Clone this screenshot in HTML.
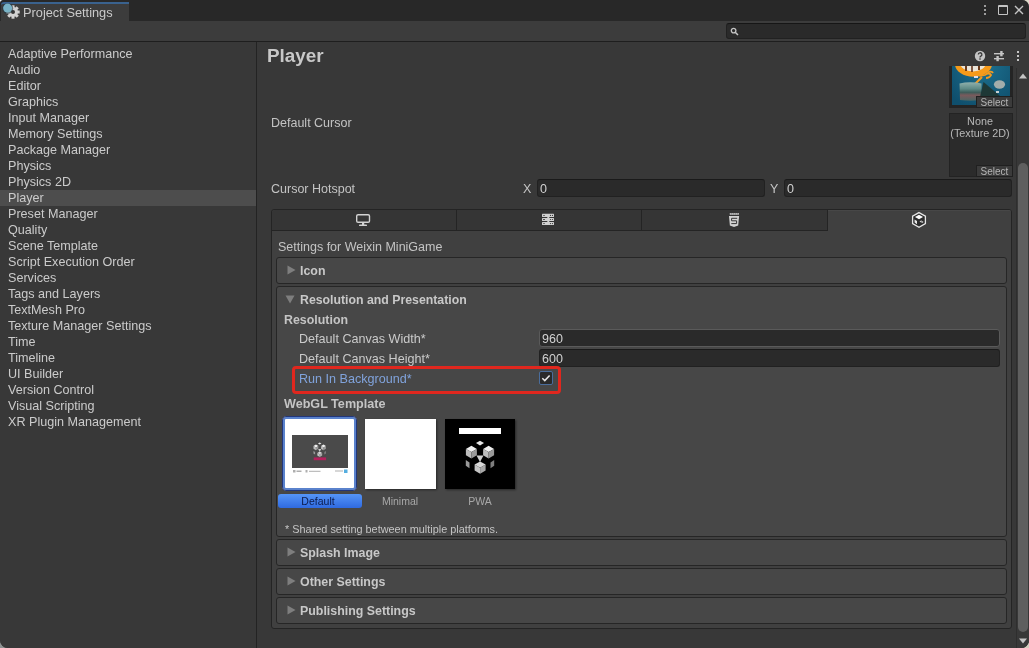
<!DOCTYPE html>
<html><head><meta charset="utf-8"><style>
html,body{margin:0;padding:0;width:1029px;height:648px;overflow:hidden;background:#383838}
body{position:relative;font-family:"Liberation Sans",sans-serif}
.r{position:absolute}
.t{position:absolute;white-space:nowrap;line-height:1}
</style></head><body>
<div class="r" style="left:0;top:0;width:8px;height:8px;background:#e6eaee"></div>
<div class="r" style="right:0;top:0;width:8px;height:8px;background:#dcd8c8"></div>
<div class="r" style="left:0;bottom:0;width:8px;height:8px;background:#8e9292"></div>
<div class="r" style="right:0;bottom:0;width:8px;height:8px;background:#d2cdbd"></div>
<div class="r" style="left:0;top:0;width:1029px;height:648px;overflow:hidden;border-radius:4px 7px 8px 8px;background:#383838;will-change:transform">
<div class="r" style="left:0px;top:0px;width:1029px;height:21px;background:#282828"></div>
<div class="r" style="left:1px;top:2px;width:128px;height:19px;background:#3c3c3c;border-top:2px solid #3a628e;box-sizing:border-box;border-top-left-radius:3px"></div>
<svg class="r" style="left:0px;top:0px" width="22" height="21" viewBox="0 0 22 21">
<g transform="translate(13,12)" fill="#d2d2d2"><circle r="4.9"/><rect x="-1.5" y="-6.7" width="3" height="3" transform="rotate(0)"/><rect x="-1.5" y="-6.7" width="3" height="3" transform="rotate(45)"/><rect x="-1.5" y="-6.7" width="3" height="3" transform="rotate(90)"/><rect x="-1.5" y="-6.7" width="3" height="3" transform="rotate(135)"/><rect x="-1.5" y="-6.7" width="3" height="3" transform="rotate(180)"/><rect x="-1.5" y="-6.7" width="3" height="3" transform="rotate(225)"/><rect x="-1.5" y="-6.7" width="3" height="3" transform="rotate(270)"/><rect x="-1.5" y="-6.7" width="3" height="3" transform="rotate(315)"/><circle r="2" fill="#363636"/></g>
<circle cx="7.8" cy="8.4" r="5.4" fill="#1f3440" opacity="0.6"/>
<circle cx="7.6" cy="8.1" r="4.5" fill="#79b3c6"/>
</svg>
<div class="t" style="left:23px;top:7.16px;font-size:12.8px;font-weight:400;color:#cbcbcb;">Project Settings</div>
<div class="r" style="left:984px;top:5px;width:2px;height:2px;background:#c4c4c4;border-radius:1px"></div>
<div class="r" style="left:984px;top:9px;width:2px;height:2px;background:#c4c4c4;border-radius:1px"></div>
<div class="r" style="left:984px;top:13px;width:2px;height:2px;background:#c4c4c4;border-radius:1px"></div>
<div class="r" style="left:998px;top:5px;width:10px;height:10px;border:1px solid #c4c4c4;border-top-width:2px;box-sizing:border-box;border-radius:1px"></div>
<svg class="r" style="left:1014px;top:5px" width="10" height="10" viewBox="0 0 10 10"><path d="M1 1L9 9M9 1L1 9" stroke="#c4c4c4" stroke-width="1.4"/></svg>
<div class="r" style="left:0px;top:21px;width:1029px;height:20px;background:#3c3c3c"></div>
<div class="r" style="left:726px;top:23px;width:300px;height:16px;background:#2a2a2a;border:1px solid #212121;border-top-color:#161616;box-sizing:border-box;border-radius:3px"></div>
<svg class="r" style="left:730px;top:27px" width="10" height="10" viewBox="0 0 10 10"><circle cx="3.6" cy="3.6" r="2.3" fill="none" stroke="#c4c4c4" stroke-width="1.3"/><path d="M5.2 5.2L8 8" stroke="#c4c4c4" stroke-width="1.5"/></svg>
<div class="r" style="left:0px;top:41px;width:1029px;height:1px;background:#1e1e1e"></div>
<div class="r" style="left:0px;top:42px;width:256px;height:606px;background:#383838"></div>
<div class="t" style="left:8px;top:48.33px;font-size:12.6px;font-weight:400;color:#cbcbcb;">Adaptive Performance</div>
<div class="t" style="left:8px;top:64.33px;font-size:12.6px;font-weight:400;color:#cbcbcb;">Audio</div>
<div class="t" style="left:8px;top:80.33px;font-size:12.6px;font-weight:400;color:#cbcbcb;">Editor</div>
<div class="t" style="left:8px;top:96.33px;font-size:12.6px;font-weight:400;color:#cbcbcb;">Graphics</div>
<div class="t" style="left:8px;top:112.33px;font-size:12.6px;font-weight:400;color:#cbcbcb;">Input Manager</div>
<div class="t" style="left:8px;top:128.33px;font-size:12.6px;font-weight:400;color:#cbcbcb;">Memory Settings</div>
<div class="t" style="left:8px;top:144.33px;font-size:12.6px;font-weight:400;color:#cbcbcb;">Package Manager</div>
<div class="t" style="left:8px;top:160.33px;font-size:12.6px;font-weight:400;color:#cbcbcb;">Physics</div>
<div class="t" style="left:8px;top:176.33px;font-size:12.6px;font-weight:400;color:#cbcbcb;">Physics 2D</div>
<div class="r" style="left:0px;top:190px;width:256px;height:16px;background:#4d4d4d"></div>
<div class="t" style="left:8px;top:192.33px;font-size:12.6px;font-weight:400;color:#cbcbcb;">Player</div>
<div class="t" style="left:8px;top:208.33px;font-size:12.6px;font-weight:400;color:#cbcbcb;">Preset Manager</div>
<div class="t" style="left:8px;top:224.33px;font-size:12.6px;font-weight:400;color:#cbcbcb;">Quality</div>
<div class="t" style="left:8px;top:240.33px;font-size:12.6px;font-weight:400;color:#cbcbcb;">Scene Template</div>
<div class="t" style="left:8px;top:256.33px;font-size:12.6px;font-weight:400;color:#cbcbcb;">Script Execution Order</div>
<div class="t" style="left:8px;top:272.33px;font-size:12.6px;font-weight:400;color:#cbcbcb;">Services</div>
<div class="t" style="left:8px;top:288.33px;font-size:12.6px;font-weight:400;color:#cbcbcb;">Tags and Layers</div>
<div class="t" style="left:8px;top:304.33px;font-size:12.6px;font-weight:400;color:#cbcbcb;">TextMesh Pro</div>
<div class="t" style="left:8px;top:320.33px;font-size:12.6px;font-weight:400;color:#cbcbcb;">Texture Manager Settings</div>
<div class="t" style="left:8px;top:336.33px;font-size:12.6px;font-weight:400;color:#cbcbcb;">Time</div>
<div class="t" style="left:8px;top:352.33px;font-size:12.6px;font-weight:400;color:#cbcbcb;">Timeline</div>
<div class="t" style="left:8px;top:368.33px;font-size:12.6px;font-weight:400;color:#cbcbcb;">UI Builder</div>
<div class="t" style="left:8px;top:384.33px;font-size:12.6px;font-weight:400;color:#cbcbcb;">Version Control</div>
<div class="t" style="left:8px;top:400.33px;font-size:12.6px;font-weight:400;color:#cbcbcb;">Visual Scripting</div>
<div class="t" style="left:8px;top:416.33px;font-size:12.6px;font-weight:400;color:#cbcbcb;">XR Plugin Management</div>
<div class="r" style="left:256px;top:42px;width:1px;height:606px;background:#232323"></div>
<div class="r" style="left:257px;top:42px;width:772px;height:606px;background:#383838"></div>
<div class="t" style="left:267px;top:46.60px;font-size:18.9px;font-weight:700;color:#c8c8c8;">Player</div>
<svg class="r" style="left:974px;top:50px" width="12" height="12" viewBox="0 0 12 12"><circle cx="6" cy="6" r="5.2" fill="#c4c4c4"/><path d="M4.3 4.6a1.8 1.8 0 1 1 2.6 1.6c-.6.3-.9.6-.9 1.3" fill="none" stroke="#383838" stroke-width="1.3"/><rect x="5.3" y="8.3" width="1.4" height="1.4" fill="#383838"/></svg>
<svg class="r" style="left:993px;top:50px" width="12" height="12" viewBox="0 0 12 12" fill="#c4c4c4"><rect x="1" y="3" width="10" height="1.4"/><rect x="7.2" y="1" width="2.4" height="5.3"/><rect x="1" y="8" width="10" height="1.4"/><rect x="3.4" y="6" width="2.4" height="5.2"/></svg>
<div class="r" style="left:1017px;top:51px;width:2px;height:2px;background:#c4c4c4"></div>
<div class="r" style="left:1017px;top:55px;width:2px;height:2px;background:#c4c4c4"></div>
<div class="r" style="left:1017px;top:59px;width:2px;height:2px;background:#c4c4c4"></div>
<div class="r" style="left:257px;top:66px;width:772px;height:582px;overflow:hidden">
<div class="r" style="left:692px;top:-16px;width:64px;height:58px;background:#242424"></div>
<svg class="r" style="left:683px;top:-26px" width="100" height="70" viewBox="940 40 100 70">
<defs><radialGradient id="bg" cx="0.55" cy="0.35" r="0.75"><stop offset="0" stop-color="#1d7190"/><stop offset="1" stop-color="#0f4f6d"/></radialGradient>
<linearGradient id="brl" x1="0" y1="0" x2="0" y2="1"><stop offset="0" stop-color="#8fb0ac"/><stop offset="0.35" stop-color="#5e8a86"/><stop offset="0.55" stop-color="#3e5d5a"/><stop offset="0.7" stop-color="#7a5a5c"/><stop offset="1" stop-color="#4a6664"/></linearGradient></defs>
<rect x="952" y="45" width="58" height="60" fill="url(#bg)"/>
<ellipse cx="973.5" cy="64" rx="18.5" ry="12.8" fill="#f59a1a"/>
<ellipse cx="973" cy="63" rx="13" ry="8.5" fill="#e9e4da"/>
<path d="M966 66v5M979 66v4" stroke="#6b3a1a" stroke-width="2"/>
<path d="M972 66v6" stroke="#5a2a10" stroke-width="1.5"/>
<path d="M976 75c3 1 6 1 9 0M985 75c2-2 5-2 6 0c-1 2-3 3-5 3M987 74c2-3 5-3 6-1" stroke="#f39a1e" stroke-width="1.8" fill="none"/>
<path d="M982 77L974 85" stroke="#f39a1e" stroke-width="2.2"/>
<rect x="974" y="76" width="4" height="2" fill="#dde"/>
<path d="M959.5 83.5Q970 81 981.5 83.5V100Q970 101.5 960 100Z" fill="url(#brl)"/>
<path d="M980 97L983.5 82L1000 96Z" fill="#1e3836"/>
<ellipse cx="999.5" cy="84.5" rx="5.6" ry="4.2" fill="#a2adab"/>
<rect x="996" y="91" width="3" height="2" fill="#c8d0d0"/>
</svg>
<div class="r" style="left:719px;top:30px;width:37px;height:12px;background:#3b3b3b;border:1px solid #202020;box-sizing:border-box"></div>
<div class="t" style="left:537.5px;width:400px;text-align:center;top:31.54px;font-size:10px;font-weight:400;color:#b4b4b4;">Select</div>
<div class="t" style="left:14px;top:51.42px;font-size:12.5px;font-weight:400;color:#c4c4c4;">Default Cursor</div>
<div class="r" style="left:692px;top:47px;width:64px;height:64px;background:#2b2b2b;border:1px solid #232323;box-sizing:border-box"></div>
<div class="t" style="left:523px;width:400px;text-align:center;top:49.86px;font-size:10.8px;font-weight:400;color:#b8b8b8;">None</div>
<div class="t" style="left:523px;width:400px;text-align:center;top:61.86px;font-size:10.8px;font-weight:400;color:#b8b8b8;">(Texture 2D)</div>
<div class="r" style="left:719px;top:99px;width:37px;height:12px;background:#3b3b3b;border:1px solid #202020;box-sizing:border-box"></div>
<div class="t" style="left:537.5px;width:400px;text-align:center;top:100.53px;font-size:10px;font-weight:400;color:#b4b4b4;">Select</div>
<div class="t" style="left:14px;top:117.42px;font-size:12.5px;font-weight:400;color:#c4c4c4;">Cursor Hotspot</div>
<div class="t" style="left:266px;top:117.42px;font-size:12.5px;font-weight:400;color:#c4c4c4;">X</div>
<div class="r" style="left:280px;top:113px;width:228px;height:18px;background:#2a2a2a;border:1px solid #212121;border-top-color:#1a1a1a;box-sizing:border-box;border-radius:3px"></div>
<div class="t" style="left:283px;top:117.42px;font-size:12.5px;font-weight:400;color:#d2d2d2;">0</div>
<div class="t" style="left:513px;top:117.42px;font-size:12.5px;font-weight:400;color:#c4c4c4;">Y</div>
<div class="r" style="left:527px;top:113px;width:228px;height:18px;background:#2a2a2a;border:1px solid #212121;border-top-color:#1a1a1a;box-sizing:border-box;border-radius:3px"></div>
<div class="t" style="left:530px;top:117.42px;font-size:12.5px;font-weight:400;color:#d2d2d2;">0</div>
<div class="r" style="left:14px;top:143px;width:741px;height:420px;background:#404040;border:1px solid #242424;box-sizing:border-box;border-radius:3px"></div>
<div class="r" style="left:15px;top:144px;width:555px;height:21px;background:#353535;border-bottom:1px solid #242424;box-sizing:border-box;border-top-left-radius:3px"></div>
<div class="r" style="left:199px;top:144px;width:1px;height:20px;background:#242424"></div>
<div class="r" style="left:384px;top:144px;width:1px;height:20px;background:#242424"></div>
<div class="r" style="left:570px;top:144px;width:1px;height:21px;background:#242424"></div>
<div class="r" style="left:571px;top:144px;width:183px;height:21px;background:#404040;border-top:1px solid #474747;box-sizing:border-box;border-top-right-radius:2px"></div>
<svg class="r" style="left:0px;top:134px" width="772" height="40" viewBox="257 200 772 40">
<g fill="none" stroke="#d2d2d2" stroke-width="1.4"><rect x="356.7" y="214.7" width="12.8" height="7.6" rx="1.4"/></g>
<g fill="#d2d2d2"><rect x="362" y="222.5" width="2.2" height="2.6"/><rect x="359" y="224.6" width="8" height="1.5" rx="0.7"/></g>
<g fill="#d2d2d2"><rect x="547.3" y="216.5" width="2" height="1.8"/><rect x="547.3" y="220.6" width="2" height="1.8"/><rect x="542" y="213.8" width="12" height="3.1" rx="0.5"/><rect x="542" y="217.9" width="12" height="3.1" rx="0.5"/><rect x="542" y="222" width="12" height="3.1" rx="0.5"/></g>
<g fill="#3a3a3a"><rect x="543" y="215" width="2" height="0.8" rx="0.4"/><rect x="543" y="219.1" width="2" height="0.8" rx="0.4"/><rect x="543" y="223.2" width="2" height="0.8" rx="0.4"/>
<circle cx="550.5" cy="215.4" r="0.6"/><circle cx="552.5" cy="215.4" r="0.6"/><circle cx="550.5" cy="219.5" r="0.6"/><circle cx="552.5" cy="219.5" r="0.6"/><circle cx="550.5" cy="223.6" r="0.6"/><circle cx="552.5" cy="223.6" r="0.6"/></g>
<g fill="#d2d2d2"><rect x="729.8" y="213" width="9" height="1.8"/><path d="M729 216L739.1 216L738.2 225.5L734 227L729.9 225.5Z"/></g>
<path d="M737.2 218.3H731.6V220.8H736.6V223.6H731.3" fill="none" stroke="#353535" stroke-width="1.0"/><g fill="#353535"><rect x="730.6" y="213.5" width="1.2" height="0.8"/><rect x="732.6" y="213.5" width="1.2" height="0.8"/><rect x="734.6" y="213.5" width="1.2" height="0.8"/><rect x="736.6" y="213.5" width="1.2" height="0.8"/></g>
<path d="M919 212.6L925.4 216.2V223.6L919 227.2L912.6 223.6V216.2Z" fill="#2c2c2c" stroke="#e6e6e6" stroke-width="1.3"/>
<path d="M919 214.8L923 217.1L919 219.3L915 217.1Z" fill="#ffffff"/>
<path d="M914.5 219.5L917 221V224.3L914.6 222.6Z" fill="#e8e8e8"/>
<path d="M919.5 221.5L921.6 220.2V222.8Z" fill="#d8d8d8"/><circle cx="922.5" cy="222" r="0.8" fill="#e8e8e8"/>
</svg>
<div class="t" style="left:21px;top:175.42px;font-size:12.5px;font-weight:400;color:#c4c4c4;">Settings for Weixin MiniGame</div>
<div class="r" style="left:19px;top:191px;width:731px;height:27px;background:#474747;border:1px solid #262626;box-sizing:border-box;border-radius:3px"></div>
<div class="r" style="left:19px;top:220px;width:731px;height:251px;background:#474747;border:1px solid #262626;box-sizing:border-box;border-radius:3px"></div>
<div class="r" style="left:19px;top:473px;width:731px;height:27px;background:#474747;border:1px solid #262626;box-sizing:border-box;border-radius:3px"></div>
<div class="r" style="left:19px;top:502px;width:731px;height:27px;background:#474747;border:1px solid #262626;box-sizing:border-box;border-radius:3px"></div>
<div class="r" style="left:19px;top:531px;width:731px;height:27px;background:#474747;border:1px solid #262626;box-sizing:border-box;border-radius:3px"></div>
<svg class="r" style="left:30px;top:199px" width="9" height="10" viewBox="0 0 9 10"><path d="M0.5 0.5L8.5 5L0.5 9.5Z" fill="#7e7e7e"/></svg>
<div class="t" style="left:43px;top:199.10px;font-size:12.4px;font-weight:700;color:#c8c8c8;">Icon</div>
<svg class="r" style="left:30px;top:481px" width="9" height="10" viewBox="0 0 9 10"><path d="M0.5 0.5L8.5 5L0.5 9.5Z" fill="#7e7e7e"/></svg>
<div class="t" style="left:43px;top:481.10px;font-size:12.4px;font-weight:700;color:#c8c8c8;">Splash Image</div>
<svg class="r" style="left:30px;top:510px" width="9" height="10" viewBox="0 0 9 10"><path d="M0.5 0.5L8.5 5L0.5 9.5Z" fill="#7e7e7e"/></svg>
<div class="t" style="left:43px;top:510.10px;font-size:12.4px;font-weight:700;color:#c8c8c8;">Other Settings</div>
<svg class="r" style="left:30px;top:539px" width="9" height="10" viewBox="0 0 9 10"><path d="M0.5 0.5L8.5 5L0.5 9.5Z" fill="#7e7e7e"/></svg>
<div class="t" style="left:43px;top:539.10px;font-size:12.4px;font-weight:700;color:#c8c8c8;">Publishing Settings</div>
<svg class="r" style="left:28px;top:229px" width="10" height="9" viewBox="0 0 10 9"><path d="M0.5 0.5L9.5 0.5L5 8.5Z" fill="#7e7e7e"/></svg>
<div class="t" style="left:43px;top:227.59px;font-size:12.3px;font-weight:700;color:#c8c8c8;">Resolution and Presentation</div>
<div class="t" style="left:27px;top:247.50px;font-size:12.4px;font-weight:700;color:#c4c4c4;">Resolution</div>
<div class="t" style="left:42px;top:267.33px;font-size:12.6px;font-weight:400;color:#cbcbcb;">Default Canvas Width*</div>
<div class="r" style="left:282px;top:263px;width:461px;height:18px;background:#2a2a2a;border:1px solid #5a5a5a;box-sizing:border-box;border-radius:3px"></div>
<div class="t" style="left:285px;top:267.42px;font-size:12.5px;font-weight:400;color:#d2d2d2;">960</div>
<div class="t" style="left:42px;top:287.33px;font-size:12.6px;font-weight:400;color:#cbcbcb;">Default Canvas Height*</div>
<div class="r" style="left:282px;top:283px;width:461px;height:18px;background:#2a2a2a;border:1px solid #212121;border-top-color:#1a1a1a;box-sizing:border-box;border-radius:3px"></div>
<div class="t" style="left:285px;top:287.42px;font-size:12.5px;font-weight:400;color:#d2d2d2;">600</div>
<div class="t" style="left:42px;top:307.33px;font-size:12.6px;font-weight:400;color:#80a3dc;">Run In Background*</div>
<div class="r" style="left:282px;top:305px;width:14px;height:14px;background:#2a2a2a;border:1px solid #4a6d9c;box-sizing:border-box;border-radius:2px"></div>
<svg class="r" style="left:282px;top:305px" width="14" height="14" viewBox="0 0 14 14"><path d="M3.3 7.2L5.8 9.6L10.6 4.4" fill="none" stroke="#e8e8e8" stroke-width="1.5"/></svg>
<div class="r" style="left:35px;top:300px;width:269px;height:28px;border:3px solid #e0271e;box-sizing:border-box;border-radius:4px"></div>
<div class="t" style="left:27px;top:332.33px;font-size:12.6px;font-weight:700;color:#c4c4c4;">WebGL Template</div>
<div class="r" style="left:25px;top:350px;width:75px;height:75px;background:#fff;border:1px solid #22367a;box-shadow:inset 0 0 0 2px #5a82cc;box-sizing:border-box;border-radius:4px"></div>
<div class="r" style="left:35px;top:369px;width:56px;height:33px;background:#4a4a4a"></div>
<div class="r" style="left:21px;top:428px;width:84px;height:14px;background:linear-gradient(#5595f8,#2f6ae0);border-radius:3px"></div>
<div class="t" style="left:-139px;width:400px;text-align:center;top:430.11px;font-size:10.5px;font-weight:400;color:#0c1b4d;">Default</div>
<div class="r" style="left:108px;top:353px;width:71px;height:70px;background:#fff;box-shadow:1px 1px 2px rgba(0,0,0,0.45)"></div>
<div class="t" style="left:-57px;width:400px;text-align:center;top:430.11px;font-size:10.5px;font-weight:400;color:#a8a8a8;">Minimal</div>
<div class="r" style="left:188px;top:353px;width:70px;height:70px;background:#000;box-shadow:1px 1px 2px rgba(0,0,0,0.45)"></div>
<div class="r" style="left:202px;top:362px;width:42px;height:6px;background:#fff"></div>
<svg class="r" style="left:13px;top:349px" width="260" height="70" viewBox="270 415 260 70"><defs><filter id="lb" x="-20%" y="-20%" width="140%" height="140%"><feGaussianBlur stdDeviation="0.45"/></filter></defs><g filter="url(#lb)" transform="translate(480,458) scale(1.0) translate(-480,-458)"><polygon points="480,440.8 484,443.1 480,445.4 476,443.1" fill="#e6e6e6"/><polygon points="471.4,445.7 476.9,448.87899999999996 471.4,452.058 465.9,448.87899999999996" fill="#f0f0f0"/><polygon points="465.9,448.87899999999996 471.4,452.058 471.4,458.4 465.9,455.221" fill="#bdbdbd"/><polygon points="476.9,448.87899999999996 471.4,452.058 471.4,458.4 476.9,455.221" fill="#9a9a9a"/><polygon points="488.6,445.7 494.1,448.87899999999996 488.6,452.058 483.1,448.87899999999996" fill="#f0f0f0"/><polygon points="483.1,448.87899999999996 488.6,452.058 488.6,458.4 483.1,455.221" fill="#bdbdbd"/><polygon points="494.1,448.87899999999996 488.6,452.058 488.6,458.4 494.1,455.221" fill="#9a9a9a"/><polygon points="476.5,455.5 483.5,455.5 480,462" fill="#cfcfcf"/><polygon points="480.1,461.4 485.6,464.57899999999995 480.1,467.758 474.6,464.57899999999995" fill="#d8d8d8"/><polygon points="474.6,464.57899999999995 480.1,467.758 480.1,473.7 474.6,470.521" fill="#c4c4c4"/><polygon points="485.6,464.57899999999995 480.1,467.758 480.1,473.7 485.6,470.521" fill="#a8a8a8"/><polygon points="465.8,460 469.5,462.5 469.5,468.2 465.8,465.7" fill="#9a9a9a"/><polygon points="494.2,460 490.5,462.5 490.5,468.2 494.2,465.7" fill="#7e7e7e"/></g><g filter="url(#lb)" transform="translate(319.7,450) scale(0.44) translate(-480,-458)"><polygon points="480,440.8 484,443.1 480,445.4 476,443.1" fill="#e6e6e6"/><polygon points="471.4,445.7 476.9,448.87899999999996 471.4,452.058 465.9,448.87899999999996" fill="#f0f0f0"/><polygon points="465.9,448.87899999999996 471.4,452.058 471.4,458.4 465.9,455.221" fill="#bdbdbd"/><polygon points="476.9,448.87899999999996 471.4,452.058 471.4,458.4 476.9,455.221" fill="#9a9a9a"/><polygon points="488.6,445.7 494.1,448.87899999999996 488.6,452.058 483.1,448.87899999999996" fill="#f0f0f0"/><polygon points="483.1,448.87899999999996 488.6,452.058 488.6,458.4 483.1,455.221" fill="#bdbdbd"/><polygon points="494.1,448.87899999999996 488.6,452.058 488.6,458.4 494.1,455.221" fill="#9a9a9a"/><polygon points="476.5,455.5 483.5,455.5 480,462" fill="#cfcfcf"/><polygon points="480.1,461.4 485.6,464.57899999999995 480.1,467.758 474.6,464.57899999999995" fill="#d8d8d8"/><polygon points="474.6,464.57899999999995 480.1,467.758 480.1,473.7 474.6,470.521" fill="#c4c4c4"/><polygon points="485.6,464.57899999999995 480.1,467.758 480.1,473.7 485.6,470.521" fill="#a8a8a8"/><polygon points="465.8,460 469.5,462.5 469.5,468.2 465.8,465.7" fill="#9a9a9a"/><polygon points="494.2,460 490.5,462.5 490.5,468.2 494.2,465.7" fill="#7e7e7e"/></g><rect x="313.7" y="457.4" width="12.4" height="2.8" fill="#b5215c"/><g fill="#9a9a9a" opacity="0.8"><rect x="293" y="470" width="2.5" height="2.5"/><rect x="296.5" y="470.5" width="5" height="1.5"/><rect x="305.5" y="470" width="2" height="2.5"/><rect x="309" y="470.8" width="11.5" height="1"/><rect x="335" y="470.5" width="8" height="1"/></g><rect x="344" y="469.5" width="3.5" height="3.5" fill="#55aee0"/></svg>
<div class="t" style="left:23px;width:400px;text-align:center;top:430.11px;font-size:10.5px;font-weight:400;color:#a8a8a8;">PWA</div>
<div class="t" style="left:28px;top:457.77px;font-size:10.9px;font-weight:400;color:#c4c4c4;">* Shared setting between multiple platforms.</div>
</div>
<div class="r" style="left:1016px;top:68px;width:13px;height:580px;background:#383838;border-left:1px solid #2e2e2e;box-sizing:border-box"></div>
<svg class="r" style="left:1018px;top:73px" width="10" height="6" viewBox="0 0 10 6"><path d="M1 5.5L5 0.5L9 5.5Z" fill="#c4c4c4"/></svg>
<div class="r" style="left:1018px;top:163px;width:10px;height:469px;background:#5f5f5f;border-radius:5px"></div>
<svg class="r" style="left:1018px;top:637.5px" width="10" height="6" viewBox="0 0 10 6"><path d="M1 0.5L5 5.5L9 0.5Z" fill="#c4c4c4"/></svg>
</div></body></html>
